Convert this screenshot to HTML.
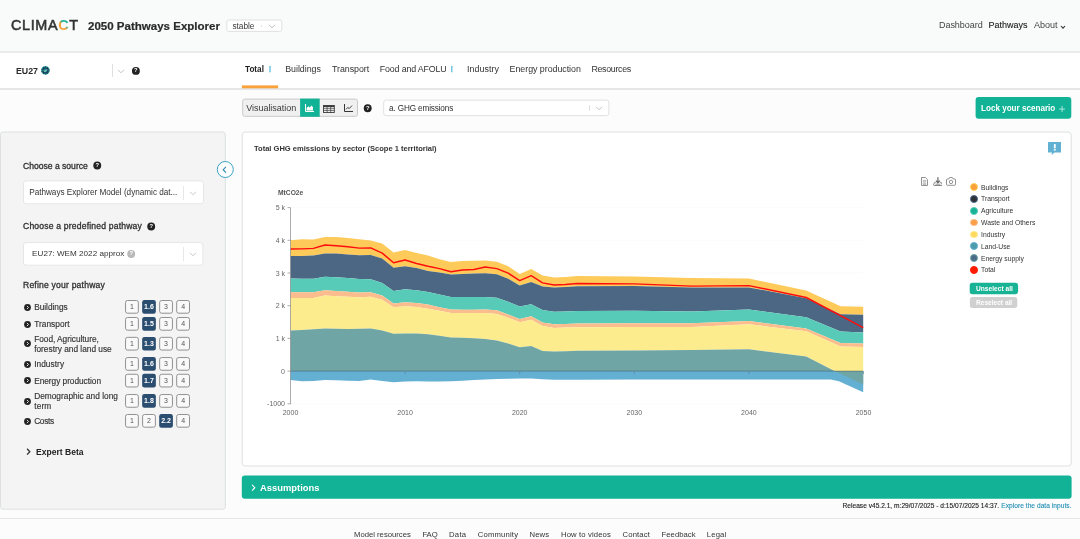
<!DOCTYPE html>
<html lang="en"><head><meta charset="utf-8"><title>2050 Pathways Explorer</title>
<style>
*{box-sizing:border-box;margin:0;padding:0}
html,body{width:1080px;height:539px;overflow:hidden}
body{font-family:"Liberation Sans",sans-serif;color:#333;background:#fcfcfc;position:relative}
.a{position:absolute;white-space:nowrap;line-height:1}
.b{font-weight:bold}
.hdr{left:0;top:0;width:1080px;height:53px;background:#f9fafa;border-bottom:2px solid #e9ecec}
.bar2{left:0;top:53px;width:1080px;height:37px;background:#fff;border-bottom:2px solid #e4e6e7}
.sel{background:#fff;border:1px solid #dcdcdc;border-radius:3px}
.sep{width:1px;background:#d4d4d4}
.ax{font-family:"Liberation Sans",sans-serif;font-size:7px;fill:#666}
.lg{font-size:6.78px;color:#333;left:981px}
.dot{width:7.8px;height:7.8px;border-radius:50%;left:969.8px;border:.7px solid}
.lv{width:13.7px;font-size:7px;color:#555;text-align:center}
.lv.on{color:#fff;font-weight:bold}
.rl{font-size:8.3px;color:#333;left:34.2px;line-height:9.6px;-webkit-text-stroke:.15px #333}
.h{font-size:8.6px;color:#303030;-webkit-text-stroke:.3px #303030}
.tab{font-size:8.85px;color:#333;top:64.5px}
.ex{color:#6cc3e3;font-weight:bold;font-size:8.8px;top:65px;-webkit-text-stroke:.25px #6cc3e3}
.qt{width:8px;color:#fff;font-size:5.8px;font-weight:bold;text-align:center}
.ft{font-size:7.7px;color:#333;top:531.3px}
#L{position:absolute;left:0;top:0;width:1080px;height:539px;will-change:transform}
</style></head><body><div id="L">

<!-- HEADER -->
<div class="a hdr"></div>
<div class="a bar2"></div>
<svg class="a" style="left:0;top:0" width="1080" height="539" viewBox="0 0 1080 539">
<rect x="241.9" y="85.4" width="36.2" height="2.9" fill="#f9a13a"/>
<rect x="226.80" y="20.00" width="55.00" height="11.40" rx="2.00" fill="#fff" stroke="#e0e0e0" stroke-width="1.00"/>
<rect x="242.70" y="99.10" width="114.80" height="17.20" rx="2.00" fill="#f0f0f0" stroke="#c9c9c9" stroke-width="1.00"/>
<rect x="300.1" y="98.6" width="19.6" height="18.2" fill="#12b296"/>
<rect x="383.70" y="100.10" width="225.20" height="15.50" rx="2.50" fill="#fff" stroke="#e0e0e0" stroke-width="1.00"/>
<rect x="975.60" y="96.90" width="95.70" height="21.80" rx="3.00" fill="#12b296"/>
<rect x="0.50" y="132.00" width="224.80" height="377.20" rx="2.50" fill="#f4f4f4" stroke="#dde0e2" stroke-width="1.00"/>
<rect x="242.20" y="132.00" width="829.00" height="334.00" rx="3.00" fill="#fff" stroke="#dde0e2" stroke-width="1.00"/>
<circle cx="225.3" cy="169.5" r="8" fill="#fff" stroke="#39a0c4" stroke-width="1"/>
<rect x="23.50" y="180.90" width="180.00" height="22.90" rx="2.50" fill="#fff" stroke="#e6e6e6" stroke-width="1.00"/>
<rect x="23.50" y="242.60" width="179.40" height="22.60" rx="2.50" fill="#fff" stroke="#e6e6e6" stroke-width="1.00"/>
<rect x="969.70" y="282.80" width="48.40" height="11.40" rx="2.60" fill="#17b394"/>
<rect x="969.90" y="297.10" width="47.40" height="10.80" rx="2.60" fill="#d0d0d0"/>
<rect x="241.80" y="475.60" width="829.80" height="23.20" rx="3.00" fill="#12b296"/>
<rect x="125.55" y="300.50" width="12.80" height="12.70" rx="1.95" fill="#f9f9f9" stroke="#868686" stroke-width="0.90"/>
<rect x="142.15" y="300.05" width="13.70" height="13.60" rx="2.20" fill="#2b4d70"/>
<rect x="159.65" y="300.50" width="12.80" height="12.70" rx="1.95" fill="#f9f9f9" stroke="#868686" stroke-width="0.90"/>
<rect x="176.70" y="300.50" width="12.80" height="12.70" rx="1.95" fill="#f9f9f9" stroke="#868686" stroke-width="0.90"/>
<rect x="125.55" y="317.50" width="12.80" height="12.70" rx="1.95" fill="#f9f9f9" stroke="#868686" stroke-width="0.90"/>
<rect x="142.15" y="317.05" width="13.70" height="13.60" rx="2.20" fill="#2b4d70"/>
<rect x="159.65" y="317.50" width="12.80" height="12.70" rx="1.95" fill="#f9f9f9" stroke="#868686" stroke-width="0.90"/>
<rect x="176.70" y="317.50" width="12.80" height="12.70" rx="1.95" fill="#f9f9f9" stroke="#868686" stroke-width="0.90"/>
<rect x="125.55" y="337.35" width="12.80" height="12.70" rx="1.95" fill="#f9f9f9" stroke="#868686" stroke-width="0.90"/>
<rect x="142.15" y="336.90" width="13.70" height="13.60" rx="2.20" fill="#2b4d70"/>
<rect x="159.65" y="337.35" width="12.80" height="12.70" rx="1.95" fill="#f9f9f9" stroke="#868686" stroke-width="0.90"/>
<rect x="176.70" y="337.35" width="12.80" height="12.70" rx="1.95" fill="#f9f9f9" stroke="#868686" stroke-width="0.90"/>
<rect x="125.55" y="357.55" width="12.80" height="12.70" rx="1.95" fill="#f9f9f9" stroke="#868686" stroke-width="0.90"/>
<rect x="142.15" y="357.10" width="13.70" height="13.60" rx="2.20" fill="#2b4d70"/>
<rect x="159.65" y="357.55" width="12.80" height="12.70" rx="1.95" fill="#f9f9f9" stroke="#868686" stroke-width="0.90"/>
<rect x="176.70" y="357.55" width="12.80" height="12.70" rx="1.95" fill="#f9f9f9" stroke="#868686" stroke-width="0.90"/>
<rect x="125.55" y="374.25" width="12.80" height="12.70" rx="1.95" fill="#f9f9f9" stroke="#868686" stroke-width="0.90"/>
<rect x="142.15" y="373.80" width="13.70" height="13.60" rx="2.20" fill="#2b4d70"/>
<rect x="159.65" y="374.25" width="12.80" height="12.70" rx="1.95" fill="#f9f9f9" stroke="#868686" stroke-width="0.90"/>
<rect x="176.70" y="374.25" width="12.80" height="12.70" rx="1.95" fill="#f9f9f9" stroke="#868686" stroke-width="0.90"/>
<rect x="125.55" y="394.55" width="12.80" height="12.70" rx="1.95" fill="#f9f9f9" stroke="#868686" stroke-width="0.90"/>
<rect x="142.15" y="394.10" width="13.70" height="13.60" rx="2.20" fill="#2b4d70"/>
<rect x="159.65" y="394.55" width="12.80" height="12.70" rx="1.95" fill="#f9f9f9" stroke="#868686" stroke-width="0.90"/>
<rect x="176.70" y="394.55" width="12.80" height="12.70" rx="1.95" fill="#f9f9f9" stroke="#868686" stroke-width="0.90"/>
<rect x="125.55" y="414.50" width="12.80" height="12.70" rx="1.95" fill="#f9f9f9" stroke="#868686" stroke-width="0.90"/>
<rect x="142.60" y="414.50" width="12.80" height="12.70" rx="1.95" fill="#f9f9f9" stroke="#868686" stroke-width="0.90"/>
<rect x="159.20" y="414.05" width="13.70" height="13.60" rx="2.20" fill="#2b4d70"/>
<rect x="176.70" y="414.50" width="12.80" height="12.70" rx="1.95" fill="#f9f9f9" stroke="#868686" stroke-width="0.90"/>
<circle cx="135.90" cy="70.90" r="3.95" fill="#222"/>
<circle cx="367.70" cy="108.30" r="3.95" fill="#222"/>
<circle cx="97.26" cy="165.50" r="3.95" fill="#222"/>
<circle cx="151.20" cy="226.50" r="3.95" fill="#222"/>
<circle cx="131.20" cy="254.00" r="3.95" fill="#b9b9b9"/>
</svg>
<div class="a" style="left:11px;top:17.7px;font-size:14.4px;letter-spacing:.66px;color:#333;-webkit-text-stroke:.55px #333">CLIMA<span style="background:linear-gradient(225deg,#1cb394 40%,#f7a23b 56%);-webkit-background-clip:text;background-clip:text;color:transparent;-webkit-text-stroke:0;font-weight:bold;font-size:14.4px;letter-spacing:.5px">C</span>T</div>
<div class="a b" style="left:87.6px;top:21.45px;font-size:10.5px;color:#2b2b2b;-webkit-text-stroke:.2px #2b2b2b;transform-origin:0 0;transform:scaleX(1.0979);">2050 Pathways Explorer</div>
<div class="a" style="left:232.4px;top:21.5px;font-size:8.3px;color:#3a3a3a;letter-spacing:-0.023px;">stable</div>
<div class="a sep" style="left:261px;top:25px;height:2px;background:#e4e4e4"></div>
<svg class="a" style="left:267.5px;top:24px" width="8" height="5" viewBox="0 0 8 5"><path d="M1 .8 L4 3.8 L7 .8" fill="none" stroke="#bbb" stroke-width="1"/></svg>
<div class="a" style="left:939px;top:21px;font-size:9px;color:#444;letter-spacing:-0.048px;">Dashboard</div>
<div class="a" style="left:988.6px;top:21px;font-size:9px;color:#222;-webkit-text-stroke:.1px #222;letter-spacing:-0.004px;">Pathways</div>
<div class="a" style="left:1034px;top:21px;font-size:9px;color:#444;letter-spacing:-0.026px;">About</div>
<svg class="a" style="left:1060.2px;top:24.8px" width="6" height="5" viewBox="0 0 6 5"><path d="M1 1 L3 3.2 L5 1" fill="none" stroke="#333" stroke-width="1.1"/></svg>

<!-- SECOND BAR -->
<div class="a b" style="left:15.9px;top:67px;font-size:8.9px;color:#2b2b2b;transform-origin:0 0;transform:scaleX(0.9909);">EU27</div>
<svg class="a" style="left:41.1px;top:66px" width="8.8" height="8.8" viewBox="0 0 8.8 8.8"><circle cx="4.4" cy="4.4" r="4.1" fill="#1cc49a"/><circle cx="4.4" cy="4.4" r="3.7" fill="none" stroke="#1f2f5e" stroke-width="1" stroke-dasharray="1.5 .8"/><circle cx="4.4" cy="4.4" r="3.1" fill="#1f2f5e"/><circle cx="4.4" cy="4.4" r="2" fill="#1a8f86"/><path d="M3 4.5 L4 5.6 L6 3.4" fill="none" stroke="#b8efd5" stroke-width=".9"/></svg>
<div class="a sep" style="left:112px;top:64px;height:13px;background:#e0e0e0"></div>
<svg class="a" style="left:117px;top:68.5px" width="8" height="5" viewBox="0 0 8 5"><path d="M1 .8 L4 3.8 L7 .8" fill="none" stroke="#c4c4c4" stroke-width="1"/></svg>
<div class="a qt" style="left:131.90px;top:68.10px">?</div>

<div class="a tab b" style="left:245.4px;color:#222;transform-origin:0 0;transform:scaleX(0.9234);">Total</div>
<div class="a ex" style="left:268.5px">!</div>
<div class="a tab" style="left:285.2px;letter-spacing:-0.021px;">Buildings</div>
<div class="a tab" style="left:332px;letter-spacing:-0.037px;">Transport</div>
<div class="a tab" style="left:379.8px;letter-spacing:-0.152px;">Food and AFOLU</div>
<div class="a ex" style="left:450.2px">!</div>
<div class="a tab" style="left:467px;letter-spacing:0.066px;">Industry</div>
<div class="a tab" style="left:509.6px;letter-spacing:-0.034px;">Energy production</div>
<div class="a tab" style="left:591.4px;letter-spacing:-0.309px;">Resources</div>

<!-- TOOLBAR -->
<div class="a" style="left:246.2px;top:103.6px;font-size:9px;color:#3a3a3a;letter-spacing:-0.029px;">Visualisation</div>
<svg class="a" style="left:305.4px;top:104.2px" width="9" height="8" viewBox="0 0 9 8"><path d="M.5 0 V7.5 H9" fill="none" stroke="#fff" stroke-width="1"/><path d="M1.6 6.4 V4 L3.4 2.2 L4.8 3.6 L6.6 1.6 L8 3.2 V6.4 Z" fill="#fff"/></svg>
<svg class="a" style="left:323.1px;top:104.5px" width="11.8" height="8" viewBox="0 0 11.8 8"><rect x=".5" y=".5" width="10.8" height="7" fill="none" stroke="#3a3a3a" stroke-width=".9"/><path d="M.5 3.3 H11.3 M.5 5.4 H11.3 M4.1 .5 V7.5 M7.7 .5 V7.5" stroke="#3a3a3a" stroke-width=".7"/><rect x=".5" y=".5" width="10.8" height="1.5" fill="#3a3a3a"/></svg>
<svg class="a" style="left:343.8px;top:104px" width="9.2" height="8" viewBox="0 0 9.2 8"><path d="M.5 0 V7.5 H9.2" fill="none" stroke="#333" stroke-width="1"/><path d="M2 5.4 L3.8 3.4 L5.2 4.6 L8 1.6" fill="none" stroke="#333" stroke-width=".9"/></svg>
<div class="a qt" style="left:363.70px;top:105.50px">?</div>
<div class="a" style="left:389.1px;top:104.9px;font-size:8.2px;color:#2e2e2e;letter-spacing:-0.152px;">a. GHG emissions</div>
<div class="a sep" style="left:589px;top:104.6px;height:6.5px;background:#e0e0e0"></div>
<svg class="a" style="left:594.5px;top:105.8px" width="8" height="5" viewBox="0 0 8 5"><path d="M1 .8 L4 3.8 L7 .8" fill="none" stroke="#c4c4c4" stroke-width="1"/></svg>
<div class="a b" style="left:981.1px;top:104.2px;font-size:9px;color:#fff;transform-origin:0 0;transform:scaleX(0.9003);">Lock your scenario</div>
<svg class="a" style="left:1059px;top:105.8px" width="6.2" height="6.2" viewBox="0 0 6.2 6.2"><path d="M3.1 0 V6.2 M0 3.1 H6.2" stroke="#b9ece2" stroke-width=".9"/></svg>

<!-- LEFT PANEL -->
<svg class="a" style="left:222.2px;top:165.8px" width="5" height="7.4" viewBox="0 0 5 7.4"><path d="M3.9 .8 L1.2 3.7 L3.9 6.6" fill="none" stroke="#2b88ad" stroke-width="1.1"/></svg>

<div class="a h" style="left:23px;top:161.6px;letter-spacing:-0.012px;">Choose a source</div>
<div class="a qt" style="left:93.26px;top:162.70px">?</div>
<div class="a" style="left:29.2px;top:188.7px;font-size:8.2px;color:#333;letter-spacing:-0.016px;">Pathways Explorer Model (dynamic dat...</div>
<div class="a sep" style="left:183px;top:186px;height:13.5px;background:#e7e7e7"></div>
<svg class="a" style="left:189px;top:190.6px" width="8" height="5" viewBox="0 0 8 5"><path d="M1 .8 L4 3.8 L7 .8" fill="none" stroke="#c8c8c8" stroke-width="1"/></svg>

<div class="a h" style="left:23px;top:222.1px;letter-spacing:0.178px;">Choose a predefined pathway</div>
<div class="a qt" style="left:147.20px;top:223.70px">?</div>
<div class="a" style="left:32.1px;top:250px;font-size:8.1px;color:#333;letter-spacing:0.020px;">EU27: WEM 2022 approx</div>
<div class="a qt" style="left:127.20px;top:251.20px">?</div>
<div class="a sep" style="left:183px;top:247.4px;height:13.5px;background:#e7e7e7"></div>
<svg class="a" style="left:189px;top:252px" width="8" height="5" viewBox="0 0 8 5"><path d="M1 .8 L4 3.8 L7 .8" fill="none" stroke="#c8c8c8" stroke-width="1"/></svg>

<div class="a h" style="left:23px;top:281.2px;letter-spacing:0.192px;">Refine your pathway</div>
<svg class="a" style="left:23.5px;top:303.5px" width="7" height="7" viewBox="0 0 7 7"><circle cx="3.5" cy="3.5" r="3.4" fill="#222"/><path d="M2.9 1.9 L4.5 3.5 L2.9 5.1" fill="none" stroke="#f4f4f4" stroke-width=".9"/></svg>
<div class="a rl" style="top:303.0px;letter-spacing:-0.030px;">Buildings</div>
<div class="a lv" style="left:125.10px;top:303.30px">1</div>
<div class="a lv on" style="left:142.15px;top:303.30px">1.6</div>
<div class="a lv" style="left:159.20px;top:303.30px">3</div>
<div class="a lv" style="left:176.25px;top:303.30px">4</div>
<svg class="a" style="left:23.5px;top:320.5px" width="7" height="7" viewBox="0 0 7 7"><circle cx="3.5" cy="3.5" r="3.4" fill="#222"/><path d="M2.9 1.9 L4.5 3.5 L2.9 5.1" fill="none" stroke="#f4f4f4" stroke-width=".9"/></svg>
<div class="a rl" style="top:320.0px;letter-spacing:0.033px;">Transport</div>
<div class="a lv" style="left:125.10px;top:320.30px">1</div>
<div class="a lv on" style="left:142.15px;top:320.30px">1.5</div>
<div class="a lv" style="left:159.20px;top:320.30px">3</div>
<div class="a lv" style="left:176.25px;top:320.30px">4</div>
<svg class="a" style="left:23.5px;top:340.3px" width="7" height="7" viewBox="0 0 7 7"><circle cx="3.5" cy="3.5" r="3.4" fill="#222"/><path d="M2.9 1.9 L4.5 3.5 L2.9 5.1" fill="none" stroke="#f4f4f4" stroke-width=".9"/></svg>
<div class="a rl" style="top:334.9px;letter-spacing:-0.024px;">Food, Agriculture,</div>
<div class="a rl" style="top:344.7px;letter-spacing:0.001px;">forestry and land use</div>
<div class="a lv" style="left:125.10px;top:340.15px">1</div>
<div class="a lv on" style="left:142.15px;top:340.15px">1.3</div>
<div class="a lv" style="left:159.20px;top:340.15px">3</div>
<div class="a lv" style="left:176.25px;top:340.15px">4</div>
<svg class="a" style="left:23.5px;top:360.5px" width="7" height="7" viewBox="0 0 7 7"><circle cx="3.5" cy="3.5" r="3.4" fill="#222"/><path d="M2.9 1.9 L4.5 3.5 L2.9 5.1" fill="none" stroke="#f4f4f4" stroke-width=".9"/></svg>
<div class="a rl" style="top:360.0px;letter-spacing:0.048px;">Industry</div>
<div class="a lv" style="left:125.10px;top:360.35px">1</div>
<div class="a lv on" style="left:142.15px;top:360.35px">1.6</div>
<div class="a lv" style="left:159.20px;top:360.35px">3</div>
<div class="a lv" style="left:176.25px;top:360.35px">4</div>
<svg class="a" style="left:23.5px;top:377.2px" width="7" height="7" viewBox="0 0 7 7"><circle cx="3.5" cy="3.5" r="3.4" fill="#222"/><path d="M2.9 1.9 L4.5 3.5 L2.9 5.1" fill="none" stroke="#f4f4f4" stroke-width=".9"/></svg>
<div class="a rl" style="top:376.7px;letter-spacing:-0.032px;">Energy production</div>
<div class="a lv" style="left:125.10px;top:377.05px">1</div>
<div class="a lv on" style="left:142.15px;top:377.05px">1.7</div>
<div class="a lv" style="left:159.20px;top:377.05px">3</div>
<div class="a lv" style="left:176.25px;top:377.05px">4</div>
<svg class="a" style="left:23.5px;top:397.5px" width="7" height="7" viewBox="0 0 7 7"><circle cx="3.5" cy="3.5" r="3.4" fill="#222"/><path d="M2.9 1.9 L4.5 3.5 L2.9 5.1" fill="none" stroke="#f4f4f4" stroke-width=".9"/></svg>
<div class="a rl" style="top:392.1px;letter-spacing:0.011px;">Demographic and long</div>
<div class="a rl" style="top:401.9px;letter-spacing:0.148px;">term</div>
<div class="a lv" style="left:125.10px;top:397.35px">1</div>
<div class="a lv on" style="left:142.15px;top:397.35px">1.8</div>
<div class="a lv" style="left:159.20px;top:397.35px">3</div>
<div class="a lv" style="left:176.25px;top:397.35px">4</div>
<svg class="a" style="left:23.5px;top:417.5px" width="7" height="7" viewBox="0 0 7 7"><circle cx="3.5" cy="3.5" r="3.4" fill="#222"/><path d="M2.9 1.9 L4.5 3.5 L2.9 5.1" fill="none" stroke="#f4f4f4" stroke-width=".9"/></svg>
<div class="a rl" style="top:417.0px;letter-spacing:-0.324px;">Costs</div>
<div class="a lv" style="left:125.10px;top:417.30px">1</div>
<div class="a lv" style="left:142.15px;top:417.30px">2</div>
<div class="a lv on" style="left:159.20px;top:417.30px">2.2</div>
<div class="a lv" style="left:176.25px;top:417.30px">4</div>
<svg class="a" style="left:25.6px;top:447.9px" width="5" height="7.4" viewBox="0 0 5 7.4"><path d="M1.1 .8 L3.8 3.7 L1.1 6.6" fill="none" stroke="#333" stroke-width="1.3"/></svg>
<div class="a b" style="left:36.4px;top:447.8px;font-size:8.6px;color:#222;transform-origin:0 0;transform:scaleX(0.9965);">Expert Beta</div>

<!-- CHART PANEL -->
<div class="a b" style="left:254.1px;top:145.3px;font-size:7.7px;color:#333;transform-origin:0 0;transform:scaleX(0.9811);">Total GHG emissions by sector (Scope 1 territorial)</div>
<svg class="a" style="left:1047.5px;top:142px" width="13.6" height="13.2" viewBox="0 0 13.6 13.2"><path d="M.5 0 H13.1 Q13.6 0 13.6 .5 V10 Q13.6 10.5 13.1 10.5 H6.6 L3.6 13 L4 10.5 H.5 Q0 10.5 0 10 V.5 Q0 0 .5 0 Z" fill="#62b1d3"/><rect x="5.9" y="2.1" width="1.8" height="4.2" fill="#fff"/><rect x="5.9" y="7.1" width="1.8" height="1.5" fill="#fff"/></svg>
<svg class="a" style="left:0;top:0" width="1080" height="539" viewBox="0 0 1080 539">
<line x1="290.5" x2="863.2" y1="403.8" y2="403.8" stroke="#f6f6f6" stroke-width="0.6"/>
<line x1="290.5" x2="863.2" y1="371.1" y2="371.1" stroke="#f6f6f6" stroke-width="0.6"/>
<line x1="290.5" x2="863.2" y1="338.4" y2="338.4" stroke="#f6f6f6" stroke-width="0.6"/>
<line x1="290.5" x2="863.2" y1="305.7" y2="305.7" stroke="#f6f6f6" stroke-width="0.6"/>
<line x1="290.5" x2="863.2" y1="273.0" y2="273.0" stroke="#f6f6f6" stroke-width="0.6"/>
<line x1="290.5" x2="863.2" y1="240.3" y2="240.3" stroke="#f6f6f6" stroke-width="0.6"/>
<line x1="290.5" x2="863.2" y1="207.6" y2="207.6" stroke="#f6f6f6" stroke-width="0.6"/>
<polygon fill="#fecb5b" points="290.5,240.3 302.0,239.2 313.4,239.5 324.9,236.9 336.3,237.1 347.8,238.1 359.3,239.2 370.7,240.6 382.2,243.6 393.6,252.4 405.1,250.0 416.6,253.1 428.0,255.6 439.5,259.3 450.9,262.1 462.4,261.1 473.9,260.7 485.3,260.4 496.8,261.7 508.2,266.3 519.7,273.9 531.2,269.0 542.6,275.6 554.1,277.4 565.5,277.0 577.0,276.0 634.3,276.4 691.6,278.1 748.9,278.5 806.2,290.4 840.6,306.3 863.2,306.8 863.2,314.7 840.6,314.3 806.2,298.2 748.9,287.4 691.6,287.4 634.3,286.1 577.0,286.3 565.5,287.1 554.1,287.5 542.6,286.4 531.2,282.0 519.7,285.5 508.2,278.8 496.8,274.2 485.3,273.2 473.9,273.6 462.4,273.9 450.9,274.6 439.5,272.5 428.0,270.9 416.6,268.0 405.1,266.3 393.6,267.7 382.2,258.6 370.7,254.9 359.3,255.3 347.8,254.5 336.3,253.6 324.9,253.6 313.4,255.6 302.0,255.9 290.5,256.1"/>
<polygon fill="#4b6783" points="290.5,256.1 302.0,255.9 313.4,255.6 324.9,253.6 336.3,253.6 347.8,254.5 359.3,255.3 370.7,254.9 382.2,258.6 393.6,267.7 405.1,266.3 416.6,268.0 428.0,270.9 439.5,272.5 450.9,274.6 462.4,273.9 473.9,273.6 485.3,273.2 496.8,274.2 508.2,278.8 519.7,285.5 531.2,282.0 542.6,286.4 554.1,287.5 565.5,287.1 577.0,286.3 634.3,286.1 691.6,287.4 748.9,287.4 806.2,298.2 840.6,314.3 863.2,314.7 863.2,332.4 840.6,331.6 806.2,317.3 748.9,309.5 691.6,311.5 634.3,310.8 577.0,310.9 565.5,311.5 554.1,311.7 542.6,310.1 531.2,304.2 519.7,306.6 508.2,301.7 496.8,297.8 485.3,296.9 473.9,296.9 462.4,296.9 450.9,296.9 439.5,294.5 428.0,292.0 416.6,290.2 405.1,289.2 393.6,290.9 382.2,283.0 370.7,279.2 359.3,279.1 347.8,278.1 336.3,277.3 324.9,276.7 313.4,278.7 302.0,278.7 290.5,278.4"/>
<polygon fill="#57cbb7" points="290.5,278.4 302.0,278.7 313.4,278.7 324.9,276.7 336.3,277.3 347.8,278.1 359.3,279.1 370.7,279.2 382.2,283.0 393.6,290.9 405.1,289.2 416.6,290.2 428.0,292.0 439.5,294.5 450.9,296.9 462.4,296.9 473.9,296.9 485.3,296.9 496.8,297.8 508.2,301.7 519.7,306.6 531.2,304.2 542.6,310.1 554.1,311.7 565.5,311.5 577.0,310.9 634.3,310.8 691.6,311.5 748.9,309.5 806.2,317.3 840.6,331.6 863.2,332.4 863.2,343.6 840.6,343.0 806.2,328.4 748.9,321.0 691.6,323.3 634.3,323.3 577.0,323.6 565.5,324.0 554.1,324.3 542.6,322.6 531.2,316.3 519.7,319.1 508.2,314.5 496.8,310.3 485.3,309.4 473.9,309.8 462.4,309.8 450.9,309.4 439.5,307.3 428.0,304.5 416.6,302.9 405.1,302.2 393.6,303.4 382.2,295.5 370.7,292.3 359.3,292.4 347.8,291.7 336.3,290.9 324.9,290.2 313.4,292.3 302.0,292.3 290.5,292.3"/>
<polygon fill="#fbbd8d" points="290.5,292.3 302.0,292.3 313.4,292.3 324.9,290.2 336.3,290.9 347.8,291.7 359.3,292.4 370.7,292.3 382.2,295.5 393.6,303.4 405.1,302.2 416.6,302.9 428.0,304.5 439.5,307.3 450.9,309.4 462.4,309.8 473.9,309.8 485.3,309.4 496.8,310.3 508.2,314.5 519.7,319.1 531.2,316.3 542.6,322.6 554.1,324.3 565.5,324.0 577.0,323.6 634.3,323.3 691.6,323.3 748.9,321.0 806.2,328.4 840.6,343.0 863.2,343.6 863.2,346.9 840.6,346.4 806.2,331.2 748.9,324.3 691.6,326.9 634.3,327.0 577.0,327.2 565.5,327.6 554.1,327.9 542.6,326.1 531.2,319.8 519.7,322.3 508.2,317.7 496.8,314.0 485.3,312.9 473.9,313.1 462.4,313.1 450.9,312.9 439.5,310.8 428.0,308.7 416.6,307.0 405.1,306.2 393.6,307.3 382.2,299.7 370.7,296.8 359.3,297.3 347.8,296.8 336.3,296.2 324.9,295.6 313.4,297.9 302.0,298.0 290.5,297.9"/>
<polygon fill="#fcec8d" points="290.5,297.9 302.0,298.0 313.4,297.9 324.9,295.6 336.3,296.2 347.8,296.8 359.3,297.3 370.7,296.8 382.2,299.7 393.6,307.3 405.1,306.2 416.6,307.0 428.0,308.7 439.5,310.8 450.9,312.9 462.4,313.1 473.9,313.1 485.3,312.9 496.8,314.0 508.2,317.7 519.7,322.3 531.2,319.8 542.6,326.1 554.1,327.9 565.5,327.6 577.0,327.2 634.3,327.0 691.6,326.9 748.9,324.3 806.2,331.2 840.6,346.4 863.2,346.9 863.2,371.1 834.5,371.1 806.2,356.6 748.9,349.2 691.6,350.1 634.3,350.5 577.0,350.8 565.5,351.2 554.1,351.6 542.6,351.0 531.2,346.0 519.7,347.3 508.2,343.6 496.8,340.4 485.3,339.0 473.9,338.2 462.4,337.8 450.9,337.5 439.5,335.8 428.0,334.3 416.6,333.6 405.1,333.4 393.6,333.8 382.2,330.6 370.7,328.6 359.3,328.8 347.8,328.9 336.3,328.8 324.9,328.4 313.4,329.3 302.0,330.1 290.5,330.6"/>
<polygon fill="#70a5a6" points="290.5,330.6 302.0,330.1 313.4,329.3 324.9,328.4 336.3,328.8 347.8,328.9 359.3,328.8 370.7,328.6 382.2,330.6 393.6,333.8 405.1,333.4 416.6,333.6 428.0,334.3 439.5,335.8 450.9,337.5 462.4,337.8 473.9,338.2 485.3,339.0 496.8,340.4 508.2,343.6 519.7,347.3 531.2,346.0 542.6,351.0 554.1,351.6 565.5,351.2 577.0,350.8 634.3,350.5 691.6,350.1 748.9,349.2 806.2,356.6 834.5,371.1 834.5,371.1 290.5,371.1"/>
<polygon fill="#63b0d2" points="290.5,371.1 863.2,371.1 863.2,392.2 839.0,381.3 830.8,379.4 806.2,379.4 748.9,379.4 691.6,379.4 634.3,379.4 577.0,379.8 565.5,379.8 554.1,379.8 542.6,379.2 531.2,378.5 519.7,378.5 508.2,378.7 496.8,379.0 485.3,379.4 473.9,380.1 462.4,380.7 450.9,381.3 439.5,381.6 428.0,381.6 416.6,381.3 405.1,381.6 393.6,382.2 382.2,380.9 370.7,379.4 359.3,380.9 347.8,380.7 336.3,380.3 324.9,380.0 313.4,380.9 302.0,381.3 290.5,380.1"/>
<polygon fill="#70a5a6" points="834.5,371.1 863.2,371.1 863.2,384.4 834.5,371.1"/>
<line x1="290.5" x2="863.2" y1="371.1" y2="371.1" stroke="#3c4650" stroke-opacity=".42" stroke-width="1"/>
<line x1="405.1" x2="405.1" y1="371.1" y2="374.1" stroke="#5b7f94" stroke-width="0.6"/>
<line x1="519.7" x2="519.7" y1="371.1" y2="374.1" stroke="#5b7f94" stroke-width="0.6"/>
<line x1="634.3" x2="634.3" y1="371.1" y2="374.1" stroke="#5b7f94" stroke-width="0.6"/>
<line x1="748.9" x2="748.9" y1="371.1" y2="374.1" stroke="#5b7f94" stroke-width="0.6"/>
<line x1="863.5" x2="863.5" y1="371.1" y2="374.1" stroke="#5b7f94" stroke-width="0.6"/>
<polyline fill="none" stroke="#ff0d0d" stroke-width="1.45" stroke-linejoin="round" points="290.5,249.0 302.0,248.9 313.4,248.4 324.9,245.0 336.3,245.8 347.8,246.8 359.3,248.1 370.7,247.9 382.2,253.1 393.6,262.8 405.1,260.0 416.6,263.5 428.0,266.3 439.5,268.6 450.9,271.8 462.4,270.0 473.9,269.5 485.3,267.0 496.8,268.6 508.2,273.2 519.7,280.6 531.2,275.7 542.6,282.9 554.1,285.0 565.5,284.5 577.0,283.5 634.3,283.9 691.6,286.1 748.9,285.6 806.2,297.5 863.2,327.6"/>
<line x1="290.5" x2="290.5" y1="207.6" y2="404.2" stroke="#8a8a8a" stroke-width="0.7"/>
<line x1="287.5" x2="290.5" y1="403.8" y2="403.8" stroke="#8a8a8a" stroke-width="0.7"/>
<text x="285.0" y="406.3" text-anchor="end" class="ax">-1000</text>
<line x1="287.5" x2="290.5" y1="371.1" y2="371.1" stroke="#8a8a8a" stroke-width="0.7"/>
<text x="285.0" y="373.6" text-anchor="end" class="ax">0</text>
<line x1="287.5" x2="290.5" y1="338.4" y2="338.4" stroke="#8a8a8a" stroke-width="0.7"/>
<text x="285.0" y="340.9" text-anchor="end" class="ax">1 k</text>
<line x1="287.5" x2="290.5" y1="305.7" y2="305.7" stroke="#8a8a8a" stroke-width="0.7"/>
<text x="285.0" y="308.2" text-anchor="end" class="ax">2 k</text>
<line x1="287.5" x2="290.5" y1="273.0" y2="273.0" stroke="#8a8a8a" stroke-width="0.7"/>
<text x="285.0" y="275.5" text-anchor="end" class="ax">3 k</text>
<line x1="287.5" x2="290.5" y1="240.3" y2="240.3" stroke="#8a8a8a" stroke-width="0.7"/>
<text x="285.0" y="242.8" text-anchor="end" class="ax">4 k</text>
<line x1="287.5" x2="290.5" y1="207.6" y2="207.6" stroke="#8a8a8a" stroke-width="0.7"/>
<text x="285.0" y="210.1" text-anchor="end" class="ax">5 k</text>
<text x="290.5" y="414.5" text-anchor="middle" class="ax">2000</text>
<text x="405.1" y="414.5" text-anchor="middle" class="ax">2010</text>
<text x="519.7" y="414.5" text-anchor="middle" class="ax">2020</text>
<text x="634.3" y="414.5" text-anchor="middle" class="ax">2030</text>
<text x="748.9" y="414.5" text-anchor="middle" class="ax">2040</text>
<text x="863.5" y="414.5" text-anchor="middle" class="ax">2050</text>
<text x="278" y="195.3" class="ax" style="font-weight:bold;fill:#555;font-size:6.7px">MtCO2e</text>
</svg>
<!-- chart icons -->
<svg class="a" style="left:921px;top:176.8px" width="7" height="9" viewBox="0 0 7 9"><path d="M.5 .5 H4.4 L6.5 2.6 V8.5 H.5 Z" fill="#fff" stroke="#777" stroke-width=".8"/><path d="M1.8 3.4 H5.2 M1.8 4.8 H5.2 M1.8 6.2 H5.2 M1.8 7.4 H5.2" stroke="#777" stroke-width=".55"/></svg>
<svg class="a" style="left:932.6px;top:176.8px" width="9.8" height="9" viewBox="0 0 9.8 9"><path d="M4.9 .3 V5.6 M2.9 3.6 L4.9 5.8 L6.9 3.6" fill="none" stroke="#666" stroke-width="1.2"/><path d="M2.6 5.4 H1.6 L.5 7.6 Q.5 8.5 1.4 8.5 H8.4 Q9.3 8.5 9.3 7.6 L8.2 5.4 H7.2" fill="none" stroke="#666" stroke-width=".8"/><path d="M2.4 7.2 H7.4" stroke="#666" stroke-width=".7"/></svg>
<svg class="a" style="left:946px;top:177.2px" width="10" height="8.8" viewBox="0 0 10 8.8"><path d="M1.6 1.9 H3 L3.7 .5 H6.3 L7 1.9 H8.4 Q9.5 1.9 9.5 3 V7.2 Q9.5 8.3 8.4 8.3 H1.6 Q.5 8.3 .5 7.2 V3 Q.5 1.9 1.6 1.9 Z" fill="#fff" stroke="#777" stroke-width=".8"/><circle cx="5" cy="4.9" r="1.7" fill="none" stroke="#777" stroke-width=".8"/></svg>
<!-- legend -->
<div class="a dot" style="top:183.2px;background:#fb9f3c;border-color:#ffd15a"></div>
<div class="a lg" style="top:184.5px">Buildings</div>
<div class="a dot" style="top:195.0px;background:#2d3138;border-color:#4b6a8c"></div>
<div class="a lg" style="top:196.3px">Transport</div>
<div class="a dot" style="top:206.9px;background:#17b394;border-color:#57cbb7"></div>
<div class="a lg" style="top:208.2px">Agriculture</div>
<div class="a dot" style="top:218.7px;background:#fb9f4a;border-color:#fbbd8d"></div>
<div class="a lg" style="top:220.0px">Waste and Others</div>
<div class="a dot" style="top:230.5px;background:#ffd960;border-color:#fcec8d"></div>
<div class="a lg" style="top:231.8px">Industry</div>
<div class="a dot" style="top:242.3px;background:#4b9bab;border-color:#63b0d2"></div>
<div class="a lg" style="top:243.7px">Land-Use</div>
<div class="a dot" style="top:254.2px;background:#4c6b88;border-color:#70a5a6"></div>
<div class="a lg" style="top:255.5px">Energy supply</div>
<div class="a dot" style="top:266.0px;background:#ff1a00;border-color:#ff1a00"></div>
<div class="a lg" style="top:267.3px">Total</div>
<div class="a b" style="left:975.6px;top:286.4px;font-size:6.8px;color:#fff;transform-origin:0 0;transform:scaleX(0.9767);">Unselect all</div>
<div class="a b" style="left:975.6px;top:299.6px;font-size:6.8px;color:#fff;transform-origin:0 0;transform:scaleX(0.9678);">Reselect all</div>

<!-- ASSUMPTIONS -->
<svg class="a" style="left:251.2px;top:483.9px" width="5" height="7.4" viewBox="0 0 5 7.4"><path d="M1.1 .8 L3.8 3.7 L1.1 6.6" fill="none" stroke="#fff" stroke-width="1.1"/></svg>
<div class="a b" style="left:260.3px;top:482.9px;font-size:9.7px;color:#fff;transform-origin:0 0;transform:scaleX(0.9695);">Assumptions</div>
<div class="a" style="left:842.6px;top:502.7px;font-size:6.6px;color:#222;-webkit-text-stroke:.12px #222;letter-spacing:0.008px;">Release v45.2.1, m:29/07/2025 - d:15/07/2025 14:37.</div>
<div class="a" style="left:1001.3px;top:502.7px;font-size:6.6px;color:#2590b4;-webkit-text-stroke:.12px #2590b4;letter-spacing:0.038px;">Explore the data inputs.</div>

<!-- FOOTER -->
<div class="a" style="left:0;top:518px;width:1080px;height:21px;background:#fcfcfc;border-top:1px solid #e6e6e6"></div>
<div class="a ft" style="left:354px;letter-spacing:-0.002px;">Model resources</div>
<div class="a ft" style="left:422.4px;letter-spacing:-0.064px;">FAQ</div>
<div class="a ft" style="left:449px;letter-spacing:0.287px;">Data</div>
<div class="a ft" style="left:477.8px;letter-spacing:0.169px;">Community</div>
<div class="a ft" style="left:529.4px;letter-spacing:0.191px;">News</div>
<div class="a ft" style="left:561px;letter-spacing:0.131px;">How to videos</div>
<div class="a ft" style="left:622.6px;letter-spacing:0.129px;">Contact</div>
<div class="a ft" style="left:661.6px;letter-spacing:0.029px;">Feedback</div>
<div class="a ft" style="left:706.8px;letter-spacing:0.158px;">Legal</div>
</div></body></html>
